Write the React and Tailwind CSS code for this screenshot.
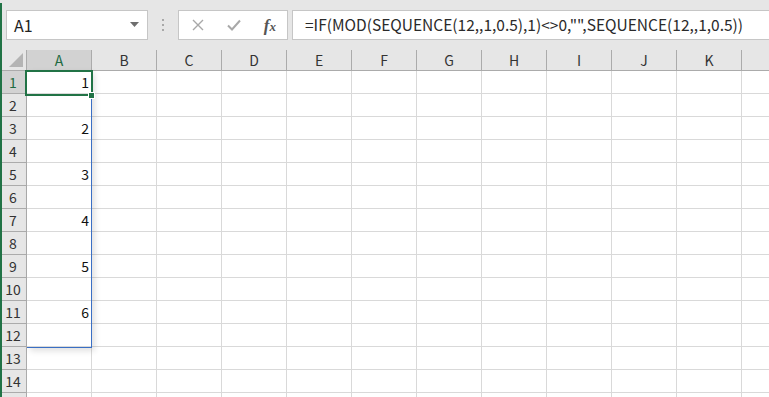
import React from 'react';

const COLS = ['A', 'B', 'C', 'D', 'E', 'F', 'G', 'H', 'I', 'J', 'K', ''];
const ROWS = [1, 2, 3, 4, 5, 6, 7, 8, 9, 10, 11, 12, 13, 14, 15];
const VALUES = { 1: '1', 3: '2', 5: '3', 7: '4', 9: '5', 11: '6' };

const font = { fontFamily: '"Noto Sans CJK JP", "Noto Sans", sans-serif' };

const Toolbar = () => (
    <div className="h-[50px] bg-[#e6e6e6] flex items-start pt-[10px] pl-[6px] gap-0">
        <div className="w-[142px] h-[30px] bg-white border border-[#c6c6c6] flex items-center justify-between pl-[7px] pr-[8px]">
            <span className="text-[16px] text-[#222] leading-none">A1</span>
            <svg width="9" height="6" viewBox="0 0 9 6">
                <path d="M0 0 L9 0 L4.5 5 Z" fill="#6e6e6e" />
            </svg>
        </div>
        <div className="w-[30px] h-[30px] flex flex-col items-center justify-center gap-[3px]">
            <span className="w-[2px] h-[2px] bg-[#a8a8a8]" />
            <span className="w-[2px] h-[2px] bg-[#a8a8a8]" />
            <span className="w-[2px] h-[2px] bg-[#a8a8a8]" />
        </div>
        <div className="w-[110px] h-[30px] bg-white border border-[#c6c6c6] flex items-center pl-[13px] pr-[11px] justify-between">
            <svg width="12" height="12" viewBox="0 0 12 12">
                <path d="M1 1 L11 11 M11 1 L1 11" stroke="#a8a8a8" strokeWidth="1.4" />
            </svg>
            <svg width="14" height="12" viewBox="0 0 14 12">
                <path d="M1 6.5 L5 10.5 L13 1.5" stroke="#a8a8a8" strokeWidth="2" fill="none" />
            </svg>
            <span className="text-[17px] italic font-bold text-[#555] leading-none" style={{ fontFamily: '"Liberation Serif", serif' }}>
                f<span className="text-[13px]">x</span>
            </span>
        </div>
        <div className="flex-1 ml-[4px] h-[30px] bg-white border border-[#c6c6c6] border-r-0 flex items-center pl-[12px]">
            <span className="text-[15.5px] text-[#2a2a2a] leading-none whitespace-nowrap">
                =IF(MOD(SEQUENCE(12,,1,0.5),1)&lt;&gt;0,"",SEQUENCE(12,,1,0.5))
            </span>
        </div>
    </div>
);

const Grid = () => (
    <div className="relative">
        <div className="grid grid-cols-[27px_repeat(11,65px)_65px]">
            <div className="h-[21px] bg-[#e6e6e6] border-r border-b border-[#ababab] flex items-end justify-end pr-[3px] pb-[3px]">
                <svg width="14" height="14" viewBox="0 0 14 14">
                    <path d="M14 0 L14 14 L0 14 Z" fill="#b4b4b4" />
                </svg>
            </div>
            {COLS.map((c, i) => (
                <div
                    key={c + i}
                    className={`h-[21px] border-r border-b border-[#ababab] flex items-center justify-center text-[14px] leading-none ${c === 'A' ? 'bg-[#d2d2d2] text-[#1e6b42]' : 'bg-[#e6e6e6] text-[#333]'}`}
                >
                    {c}
                </div>
            ))}
            {ROWS.map(r => (
                <React.Fragment key={r}>
                    <div className={`h-[23px] border-r border-b border-[#ababab] flex items-center justify-center text-[14px] leading-none ${r === 1 ? 'bg-[#d2d2d2] text-[#1e6b42]' : 'bg-[#e6e6e6] text-[#333]'}`}>
                        {r < 15 ? r : ''}
                    </div>
                    {COLS.map((c, i) => (
                        <div
                            key={c + i}
                            className="h-[23px] bg-white border-r border-b border-[#d9d9d9] flex items-center justify-end pr-[2px] text-[14px] leading-none text-[#111]"
                        >
                            {i === 0 ? VALUES[r] : ''}
                        </div>
                    ))}
                </React.Fragment>
            ))}
        </div>
        {/* spill range */}
        <div className="absolute left-[27px] top-[20px] w-[65px] h-[278px] border border-l-0 border-[#3a6fc4] shadow-[3px_3px_6px_rgba(0,0,0,0.12)] pointer-events-none" />
        {/* active cell */}
        <div className="absolute left-[25px] top-[20px] w-[68px] h-[26px] border-2 border-[#217346] pointer-events-none" />
        <div className="absolute left-[88px] top-[42px] w-[7px] h-[7px] bg-[#217346] border border-white pointer-events-none" />
    </div>
);

export default function App() {
    return (
        <div className="w-[769px] h-[397px] overflow-hidden bg-white relative" style={font}>
            <Toolbar />
            <Grid />
            <div className="absolute left-0 top-[3px] bottom-0 w-[2px] bg-[#217346]" />
        </div>
    );
}
